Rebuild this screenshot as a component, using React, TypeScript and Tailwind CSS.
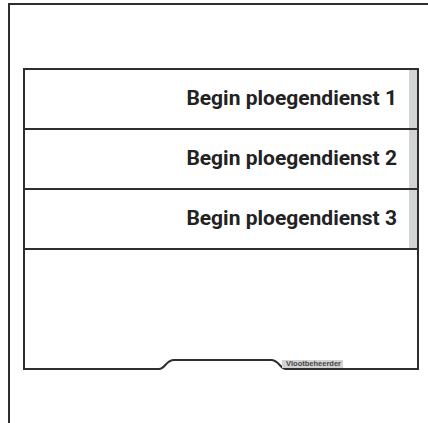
const shifts = ["Begin ploegendienst 1", "Begin ploegendienst 2", "Begin ploegendienst 3"];

export default function App() {
  return (
    <div className="h-[423px] w-full overflow-hidden bg-white">
      <div className="ml-2 mt-[3px] h-[430px] border-l-2 border-t-2 border-[#2e2e2e] pl-[13px] pt-[63px]">
        <div className="w-[396px] border-x-2 border-t-2 border-[#2e2e2e]">
          {shifts.map((label) => (
            <div key={label} className="flex h-[60px] border-b-2 border-[#2e2e2e]">
              <div className="flex flex-1 items-center justify-end pr-3 font-['Roboto',sans-serif] text-[21px] font-bold text-[#222]">
                {label}
              </div>
              <div className="w-2 bg-[#d2d3d3]" />
            </div>
          ))}
          <div className="h-[108px]" />
          <div className="relative h-3">
            <svg width="392" height="12" viewBox="0 0 392 12" className="block">
              <path
                d="M0 11 H134 C140 11 141 2 149 2 H246 C254 2 255 11 261 11 H392"
                fill="none"
                stroke="#2e2e2e"
                strokeWidth="2"
              />
            </svg>
            <span className="absolute left-[257px] top-[2px] flex h-2 w-[61px] items-center bg-[#d2d3d3] pl-[4px] font-['Liberation_Sans',Arial,sans-serif] text-[7.5px] font-bold leading-none text-[#444]">
              Vlootbeheerder
            </span>
          </div>
        </div>
      </div>
    </div>
  );
}
